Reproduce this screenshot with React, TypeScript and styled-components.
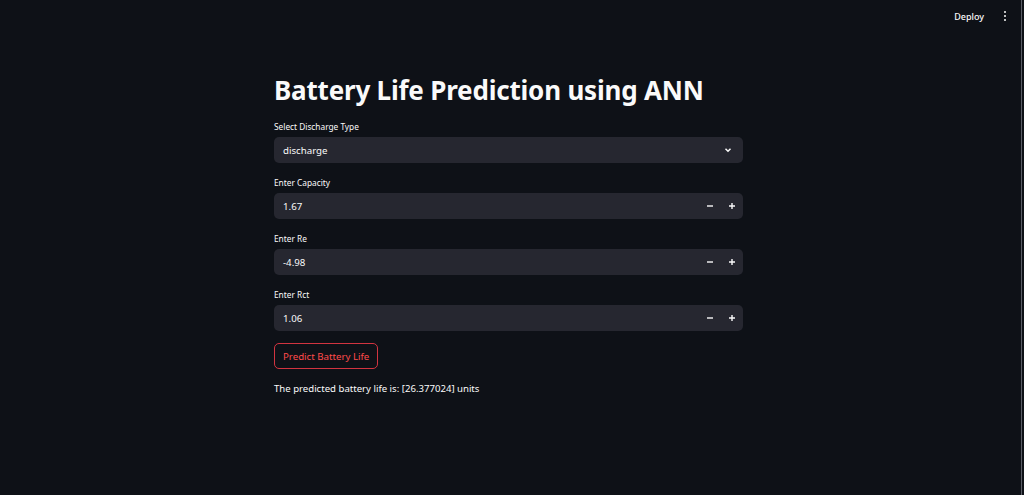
import React from "react";
import styled, { createGlobalStyle } from "styled-components";

const Global = createGlobalStyle`
  html, body { margin: 0; padding: 0; background: #0e1117; }
  body { font-family: "Noto Sans", "Open Sans", sans-serif; color: #fafafa; }
  #root { min-height: 495px; }
`;

const Page = styled.div`
  position: relative;
  width: 1024px;
  height: 495px;
  background: #0e1117;
  overflow: hidden;
  display: flex;
  flex-direction: column;
  align-items: center;
`;

const Header = styled.header`
  align-self: stretch;
  height: 32px;
  display: flex;
  align-items: center;
  justify-content: flex-end;
  padding-right: 14px;
  gap: 10px;
`;

const DeployBtn = styled.span`
  font-size: 9px;
  font-weight: 500;
  color: #fafafa;
  padding: 0 6px;
`;

const Kebab = styled.span`
  display: flex;
  flex-direction: column;
  gap: 2px;
  padding: 0 4px;
  & > i { width: 2px; height: 2px; border-radius: 1px; background: #fafafa; display: block; }
`;

const Edge = styled.div`
  position: absolute;
  right: 2px;
  top: 0;
  bottom: 0;
  width: 1px;
  background: #5a5d66;
`;

const Main = styled.main`
  width: 469px;
  margin-right: 7px;
  padding-top: 38px;
  display: flex;
  flex-direction: column;
`;

const Title = styled.h1`
  margin: 0 0 11px 0;
  font-size: 26px;
  font-weight: 700;
  line-height: 40px;
  letter-spacing: -0.2px;
  color: #fafafa;
`;

const Field = styled.div`
  display: flex;
  flex-direction: column;
  margin-bottom: 14px;
`;

const Label = styled.label`
  font-size: 8.3px;
  line-height: 12px;
  height: 16px;
  color: #fafafa;
`;

const Box = styled.div<{ $pr: number }>`
  height: 26px;
  background: #262730;
  border-radius: 5px;
  display: flex;
  align-items: center;
  padding: 0 ${(p) => p.$pr}px 0 9px;
  font-size: 9.7px;
  color: #fafafa;
`;

const Value = styled.span`
  flex: 1;
`;

const StepBtn = styled.span`
  width: 22px;
  display: flex;
  justify-content: center;
  align-items: center;
`;

const Button = styled.button`
  align-self: flex-start;
  height: 26px;
  margin-top: -2px;
  padding: 0 8px;
  background: transparent;
  border: 1px solid #d23440;
  border-radius: 5px;
  color: #ff4b4b;
  font-family: inherit;
  font-size: 9.7px;
`;

const Result = styled.p`
  margin: 12px 0 0 0;
  font-size: 9.6px;
  line-height: 16px;
  color: #fafafa;
`;

const Minus = () => (
  <svg width="8" height="8" viewBox="0 0 8 8"><path d="M1 4h6" stroke="#fafafa" strokeWidth="1.4" /></svg>
);
const Plus = () => (
  <svg width="8" height="8" viewBox="0 0 8 8"><path d="M1 4h6M4 1v6" stroke="#fafafa" strokeWidth="1.4" /></svg>
);
const Chevron = () => (
  <svg width="10" height="10" viewBox="0 0 10 10"><path d="M2.5 3.8L5 6.2l2.5-2.4" fill="none" stroke="#fafafa" strokeWidth="1.5" /></svg>
);

const NumberField = ({ label, value }: { label: string; value: string }) => (
  <Field>
    <Label>{label}</Label>
    <Box $pr={0}>
      <Value>{value}</Value>
      <StepBtn><Minus /></StepBtn>
      <StepBtn><Plus /></StepBtn>
    </Box>
  </Field>
);

export default function App() {
  return (
    <Page>
      <Global />
      <Header>
        <DeployBtn>Deploy</DeployBtn>
        <Kebab><i /><i /><i /></Kebab>
      </Header>
      <Edge />
      <Main>
        <Title>Battery Life Prediction using ANN</Title>
        <Field>
          <Label>Select Discharge Type</Label>
          <Box $pr={4}>
            <Value>discharge</Value>
            <StepBtn><Chevron /></StepBtn>
          </Box>
        </Field>
        <NumberField label="Enter Capacity" value="1.67" />
        <NumberField label="Enter Re" value="-4.98" />
        <NumberField label="Enter Rct" value="1.06" />
        <Button>Predict Battery Life</Button>
        <Result>The predicted battery life is: [26.377024] units</Result>
      </Main>
    </Page>
  );
}
